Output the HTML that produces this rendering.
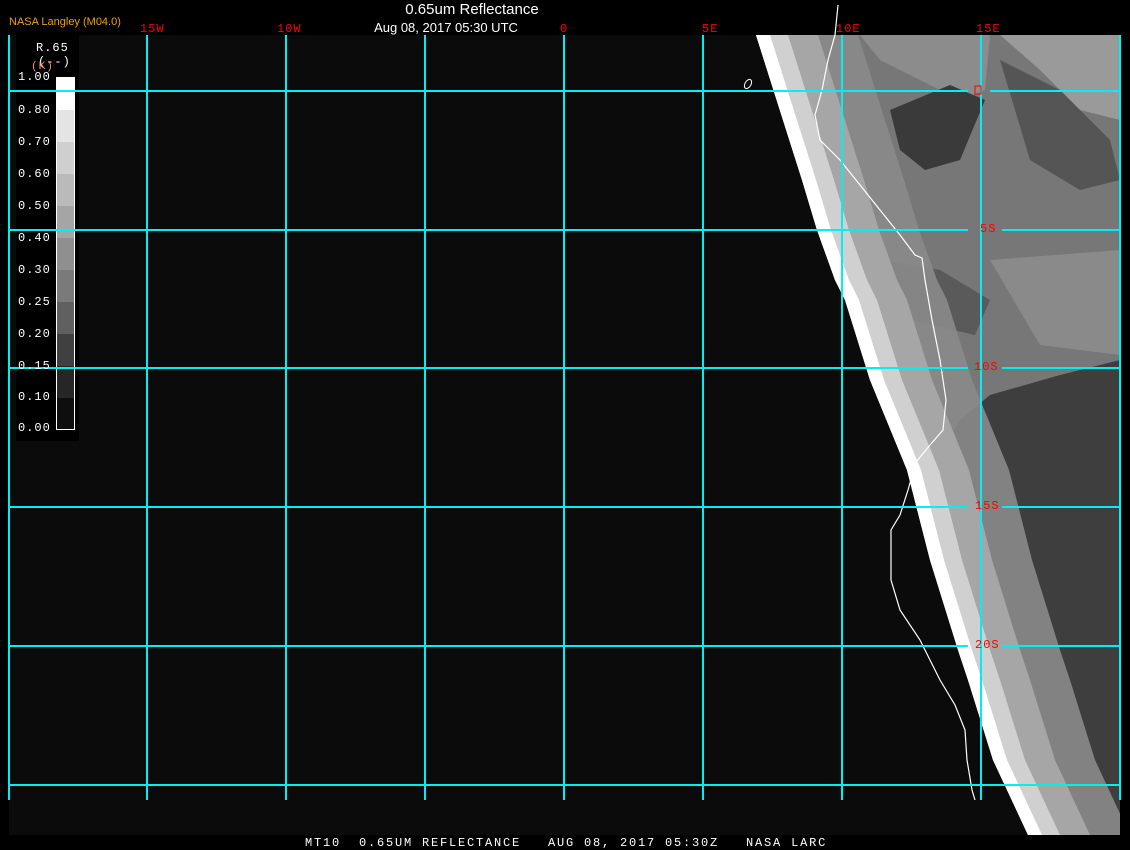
<!DOCTYPE html>
<html><head><meta charset="utf-8"><style>
html,body{margin:0;padding:0;background:#000;width:1130px;height:850px;overflow:hidden;font-family:"Liberation Mono",monospace}
.t{position:absolute;white-space:pre}
</style></head><body>
<svg width="1130" height="850" style="position:absolute;left:0;top:0" xmlns="http://www.w3.org/2000/svg">
<defs><clipPath id="c"><rect x="9" y="35" width="1111" height="800"/></clipPath></defs>
<rect x="9" y="35" width="1111" height="800" fill="#0b0b0b"/>
<g clip-path="url(#c)">
<polygon points="756,35 775,95 802,180 817,230 835,280 845,300 870,380 907,470 930,560 958,650 968,680 993,760 1028,835 1120,835 1120,35" fill="#3e3e3e"/>
<polygon points="756,35 1120,35 1120,360 1060,375 990,395 960,420 940,450 925,470 907,470 870,380 845,300 835,280 817,230 802,180 775,95" fill="#777"/>
<polygon points="1000,35 1120,35 1120,120 1080,110 1040,70" fill="#9a9a9a"/>
<polygon points="860,35 990,35 985,90 960,100 920,80 880,60" fill="#8c8c8c"/>
<polygon points="890,110 950,85 985,100 960,160 925,170 900,150" fill="#3a3a3a"/>
<polygon points="1000,60 1060,90 1110,140 1120,180 1080,190 1030,160" fill="#555"/>
<polygon points="880,260 940,270 990,300 975,335 910,320" fill="#5a5a5a"/>
<polygon points="990,260 1120,250 1120,355 1040,345" fill="#8a8a8a"/>
<polygon points="756,35 775,95 802,180 817,230 835,280 845,300 870,380 907,470 930,560 958,650 968,680 993,760 1028,835 1130,835 1095,760 1070,680 1060,650 1032,560 1009,470 972,380 947,300 937,280 919,230 904,180 877,95 858,35" fill="#8a8a8a" opacity="0.9"/>
<polygon points="756,35 775,95 802,180 817,230 835,280 845,300 870,380 907,470 930,560 958,650 968,680 993,760 1028,835 1090,835 1055,760 1030,680 1020,650 992,560 969,470 932,380 907,300 897,280 879,230 864,180 837,95 818,35" fill="#a6a6a6"/>
<polygon points="756,35 775,95 802,180 817,230 835,280 845,300 870,380 907,470 930,560 958,650 968,680 993,760 1028,835 1060,835 1025,760 1000,680 990,650 962,560 939,470 902,380 877,300 867,280 849,230 834,180 807,95 788,35" fill="#d0d0d0"/>
<polygon points="756,35 775,95 802,180 817,230 835,280 845,300 870,380 907,470 930,560 958,650 968,680 993,760 1028,835 1042,835 1007,760 982,680 972,650 944,560 921,470 884,380 859,300 849,280 831,230 816,180 789,95 770,35" fill="#fff"/>
</g>
<polyline points="838,5 835,35 828,60 822,90 815,115 820,140 840,160 860,185 880,210 900,235 915,255 922,258 925,280 932,320 940,360 946,400 943,430 930,445 916,462 908,490 900,515 891,530 891,580 900,610 920,640 940,680 955,705 965,730 967,760 972,790 975,800" fill="none" stroke="#fff" stroke-width="1.2"/>
<ellipse cx="748" cy="84" rx="3" ry="5" transform="rotate(30 748 84)" fill="none" stroke="#fff" stroke-width="1"/>
<g stroke="#00f0f0" stroke-width="2">
<line x1="9" y1="35" x2="9" y2="800"/><line x1="147" y1="35" x2="147" y2="800"/>
<line x1="286" y1="35" x2="286" y2="800"/><line x1="425" y1="35" x2="425" y2="800"/>
<line x1="564" y1="35" x2="564" y2="800"/><line x1="703" y1="35" x2="703" y2="800"/>
<line x1="842" y1="35" x2="842" y2="800"/><line x1="981" y1="35" x2="981" y2="800"/>
<line x1="1120" y1="35" x2="1120" y2="800"/>
<line x1="9" y1="91" x2="968" y2="91"/><line x1="990" y1="91" x2="1120" y2="91"/>
<line x1="9" y1="230" x2="968" y2="230"/><line x1="1002" y1="230" x2="1120" y2="230"/>
<line x1="9" y1="368" x2="968" y2="368"/><line x1="1002" y1="368" x2="1120" y2="368"/>
<line x1="9" y1="507" x2="968" y2="507"/><line x1="1002" y1="507" x2="1120" y2="507"/>
<line x1="9" y1="646" x2="968" y2="646"/><line x1="1002" y1="646" x2="1120" y2="646"/>
<line x1="9" y1="785" x2="1120" y2="785"/>
</g>
<rect x="16" y="35" width="63" height="406" fill="#000"/>
<g>
<rect x="56" y="77" width="18" height="33" fill="#fff"/>
<rect x="56" y="110" width="18" height="32" fill="#e4e4e4"/>
<rect x="56" y="142" width="18" height="32" fill="#cfcfcf"/>
<rect x="56" y="174" width="18" height="32" fill="#bababa"/>
<rect x="56" y="206" width="18" height="32" fill="#a5a5a5"/>
<rect x="56" y="238" width="18" height="32" fill="#8f8f8f"/>
<rect x="56" y="270" width="18" height="32" fill="#7a7a7a"/>
<rect x="56" y="302" width="18" height="32" fill="#606060"/>
<rect x="56" y="334" width="18" height="32" fill="#404040"/>
<rect x="56" y="366" width="18" height="32" fill="#262626"/>
<rect x="56" y="398" width="18" height="32" fill="#0e0e0e"/>
<rect x="56.5" y="77.5" width="18" height="352" fill="none" stroke="#fff" stroke-width="1"/>
</g>
<line x1="9" y1="91" x2="80" y2="91" stroke="#00f0f0" stroke-width="2"/>
<line x1="9" y1="368" x2="80" y2="368" stroke="#00f0f0" stroke-width="2"/>
<line x1="9" y1="230" x2="80" y2="230" stroke="#00f0f0" stroke-width="2"/>
<rect x="975" y="86" width="6" height="8" fill="none" stroke="#f00" stroke-width="1"/>
</svg>
<div class="t" style="left:9px;top:16px;font:11px 'Liberation Sans',sans-serif;color:#f0a000">NASA Langley (M04.0)</div>
<div class="t" style="left:372px;top:1px;width:200px;text-align:center;font:15px 'Liberation Sans',sans-serif;color:#fff">0.65um Reflectance</div>
<div class="t" style="left:346px;top:20px;width:200px;text-align:center;font:13px 'Liberation Sans',sans-serif;color:#fff">Aug 08, 2017 05:30 UTC</div>
<div style="color:#f00;font-size:12px;letter-spacing:1px">
<div class="t" style="left:140px;top:22px">15W</div>
<div class="t" style="left:277px;top:22px">10W</div>
<div class="t" style="left:560px;top:22px">0</div>
<div class="t" style="left:702px;top:22px">5E</div>
<div class="t" style="left:836px;top:22px">10E</div>
<div class="t" style="left:976px;top:22px">15E</div>
<div class="t" style="left:980px;top:222px">5S</div>
<div class="t" style="left:974px;top:360px">10S</div>
<div class="t" style="left:975px;top:499px">15S</div>
<div class="t" style="left:975px;top:638px">20S</div>
</div>
<div style="color:#fff;font-size:12px;letter-spacing:1px">
<div class="t" style="left:36px;top:41px">R.65</div>
<div class="t" style="left:38px;top:55px">(--)</div>
<div class="t" style="left:31px;top:61px;color:#f09070;font-size:11px">(K)</div>
<div class="t" style="left:18px;top:70px">1.00</div>
<div class="t" style="left:18px;top:103px">0.80</div>
<div class="t" style="left:18px;top:135px">0.70</div>
<div class="t" style="left:18px;top:167px">0.60</div>
<div class="t" style="left:18px;top:199px">0.50</div>
<div class="t" style="left:18px;top:231px">0.40</div>
<div class="t" style="left:18px;top:263px">0.30</div>
<div class="t" style="left:18px;top:295px">0.25</div>
<div class="t" style="left:18px;top:327px">0.20</div>
<div class="t" style="left:18px;top:359px">0.15</div>
<div class="t" style="left:18px;top:390px">0.10</div>
<div class="t" style="left:18px;top:421px">0.00</div>
</div>
<div class="t" style="left:305px;top:836px;color:#fff;font-size:12px;letter-spacing:1.8px">MT10  0.65UM REFLECTANCE   AUG 08, 2017 05:30Z   NASA LARC</div>
</body></html>
